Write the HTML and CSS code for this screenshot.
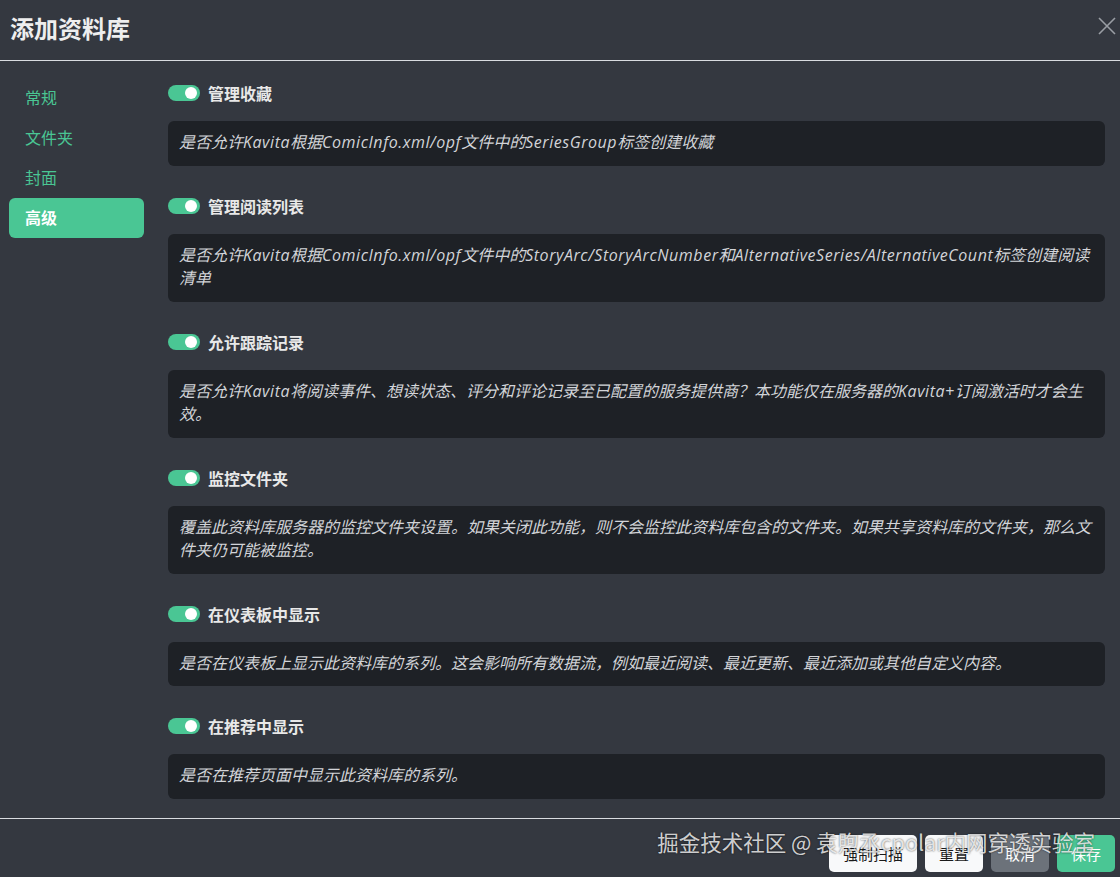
FILE: index.html
```html
<!DOCTYPE html>
<html lang="zh-CN">
<head>
    <meta charset="UTF-8">
    <meta name="viewport" content="width=device-width, initial-scale=1.0">
    <title>添加资料库</title>
    <link rel="stylesheet" href="styles.css">
</head>
<body>
    <div class="modal">
        <div class="modal-header">
            <h1 class="modal-title">添加资料库</h1>
            <button class="close-btn" aria-label="关闭">
                <svg width="18" height="18" viewBox="0 0 18 18"><path d="M1 1L17 17M17 1L1 17" stroke="currentColor" stroke-width="1.6" fill="none"/></svg>
            </button>
        </div>

        <div class="modal-body">
            <nav class="side-nav">
                <a class="nav-item">常规</a>
                <a class="nav-item">文件夹</a>
                <a class="nav-item">封面</a>
                <a class="nav-item active">高级</a>
            </nav>

            <div class="settings">
                <div class="setting">
                    <label class="switch-row"><span class="switch"></span>管理收藏</label>
                    <p class="help">是否允许<span class="en">Kavita</span>根据<span class="en">ComicInfo.xml/opf</span>文件中的<span class="en">SeriesGroup</span>标签创建收藏</p>
                </div>
                <div class="setting">
                    <label class="switch-row"><span class="switch"></span>管理阅读列表</label>
                    <p class="help">是否允许<span class="en">Kavita</span>根据<span class="en">ComicInfo.xml/opf</span>文件中的<span class="en">StoryArc/StoryArcNumber</span>和<span class="en">AlternativeSeries/AlternativeCount</span>标签创建阅读清单</p>
                </div>
                <div class="setting">
                    <label class="switch-row"><span class="switch"></span>允许跟踪记录</label>
                    <p class="help">是否允许<span class="en">Kavita</span>将阅读事件、想读状态、评分和评论记录至已配置的服务提供商？本功能仅在服务器的<span class="en">Kavita+</span>订阅激活时才会生效。</p>
                </div>
                <div class="setting">
                    <label class="switch-row"><span class="switch"></span>监控文件夹</label>
                    <p class="help">覆盖此资料库服务器的监控文件夹设置。如果关闭此功能，则不会监控此资料库包含的文件夹。如果共享资料库的文件夹，那么文件夹仍可能被监控。</p>
                </div>
                <div class="setting">
                    <label class="switch-row"><span class="switch"></span>在仪表板中显示</label>
                    <p class="help">是否在仪表板上显示此资料库的系列。这会影响所有数据流，例如最近阅读、最近更新、最近添加或其他自定义内容。</p>
                </div>
                <div class="setting">
                    <label class="switch-row"><span class="switch"></span>在推荐中显示</label>
                    <p class="help">是否在推荐页面中显示此资料库的系列。</p>
                </div>
            </div>
        </div>

        <div class="modal-footer">
            <button class="btn btn-light">强制扫描</button>
            <button class="btn btn-light">重置</button>
            <button class="btn btn-secondary">取消</button>
            <button class="btn btn-primary">保存</button>
            <span class="watermark">掘金技术社区 @ 袁煦丞cpolar内网穿透实验室</span>
        </div>
    </div>
</body>
</html>
```

FILE: styles.css
```css
/* Global */
body {
    margin: 0;
    font-family: "Open Sans", "Noto Sans CJK SC", sans-serif;
    background: #343840;
    color: #e6e6e6;
    overflow: hidden;
}

.modal {
    display: flex;
    flex-direction: column;
    height: 100vh;
    background: #343840;
}

/* Header */
.modal-header {
    display: flex;
    align-items: center;
    justify-content: space-between;
    height: 60px;
    padding: 0 2px 0 10px;
    border-bottom: 1px solid #d9dce0;
    box-sizing: content-box;
}

.modal-title {
    margin: 0 0 6px;
    font-size: 24px;
    font-weight: 700;
    color: #eeeeee;
}

.close-btn {
    background: none;
    border: none;
    color: #9a9ea4;
    padding: 0;
    width: 22px;
    height: 22px;
    display: flex;
    align-items: center;
    justify-content: center;
    margin-bottom: 8px;
    cursor: pointer;
}

/* Body */
.modal-body {
    flex: 1;
    display: flex;
    overflow: hidden;
}

.side-nav {
    width: 135px;
    padding: 17px 24px 0 9px;
    display: flex;
    flex-direction: column;
}

.nav-item {
    height: 40px;
    line-height: 40px;
    padding-left: 16px;
    font-size: 16px;
    color: #4ac694;
    border-radius: 6px;
    cursor: pointer;
}

.nav-item.active {
    background: #4ac694;
    color: #ffffff;
    font-weight: 700;
}

.settings {
    flex: 1;
    padding: 20px 15px 0 0;
}

.setting {
    margin-bottom: 28px;
}

.switch-row {
    display: flex;
    align-items: center;
    height: 24px;
    font-size: 16px;
    font-weight: 700;
    color: #e8e8e8;
}

.switch {
    position: relative;
    width: 32px;
    height: 16px;
    border-radius: 8px;
    background: #4ac694;
    margin-right: 8px;
    flex-shrink: 0;
}

.switch::after {
    content: '';
    position: absolute;
    top: 2px;
    right: 3px;
    width: 12px;
    height: 12px;
    border-radius: 50%;
    background: #ffffff;
}

.help {
    margin: 16px 0 0;
    padding: 10px 11px 11px;
    background: #1e2126;
    border-radius: 6px;
    font-size: 16px;
    font-style: italic;
    line-height: 23.5px;
    color: #d2d4d8;
}

/* latin words in the help text run a bit wider */
.help .en {
    letter-spacing: 0.55px;
}

/* Footer */
.modal-footer {
    position: relative;
    display: flex;
    justify-content: flex-end;
    gap: 8px;
    height: 59px;
    padding: 16px 5px 0 0;
    border-top: 1px solid #d9dce0;
    box-sizing: border-box;
}

.btn {
    height: 37px;
    padding: 0 14px;
    border: none;
    border-radius: 5px;
    font-family: "Noto Sans CJK SC", sans-serif;
    font-size: 15px;
    cursor: pointer;
}

.btn-light {
    background: #f8f9fa;
    color: #1a1a1a;
}

.btn-secondary {
    background: #6c727a;
    color: #ffffff;
}

.btn-primary {
    background: #4ac694;
    color: #ffffff;
}

.watermark {
    position: absolute;
    right: 25px;
    top: 7px;
    font-family: "Noto Sans CJK SC", sans-serif;
    font-size: 21.5px;
    color: rgba(255, 255, 255, 0.8);
    text-shadow: 0 0 2px rgba(0, 0, 0, 0.7);
    pointer-events: none;
}
```
